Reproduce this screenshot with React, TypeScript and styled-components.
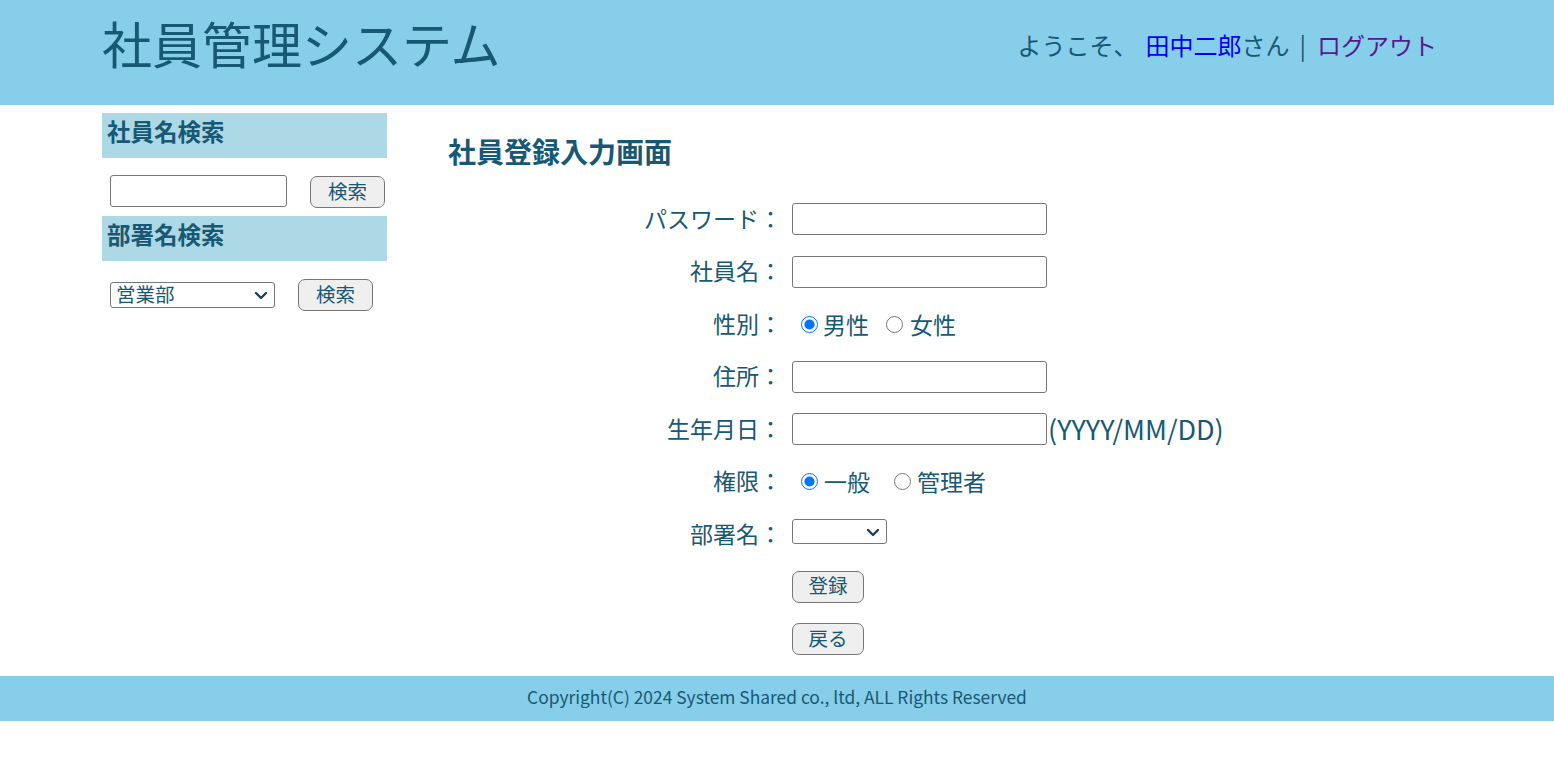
import React from "react";
import styled, { createGlobalStyle } from "styled-components";

const TEXT = "#175874";
const FONT = `"Noto Sans CJK JP", "Noto Sans", sans-serif`;

const GlobalStyle = createGlobalStyle`
  html, body { margin: 0; padding: 0; background: #ffffff; }
  body { font-family: ${FONT}; color: ${TEXT}; }
  * { box-sizing: border-box; }
`;

const Header = styled.header`
  background: #87ceeb;
  height: 105px;
  display: flex;
  align-items: center;
`;

const Container = styled.div`
  width: 1350px;
  margin: 0 auto;
`;

const HeaderInner = styled(Container)`
  display: flex;
  justify-content: space-between;
  align-items: center;
  padding-right: 15px;
  margin-top: -10px;
`;

const SiteTitle = styled.h1`
  margin: 0 0 12px 0;
  font-size: 50px;
  font-weight: normal;
  line-height: 1;
  color: ${TEXT};
`;

const Welcome = styled.div`
  font-size: 24px;
  line-height: 1;
  white-space: pre;
  display: flex;
  align-items: center;
  margin-bottom: 6px;
`;

const Greeting = styled.span`
  margin-right: 8px;
`;

const Separator = styled.span`
  margin: 0 11px 0 10px;
`;

const Link = styled.a<{ $visited?: boolean }>`
  color: ${(p) => (p.$visited ? "#551a8b" : "#0000ee")};
  text-decoration: none;
  cursor: pointer;
`;

const Body = styled(Container)`
  display: flex;
  align-items: flex-start;
`;

const Sidebar = styled.aside`
  width: 285px;
  padding-top: 8px;
`;

const SideHeading = styled.h3`
  margin: 0;
  height: 45px;
  background: #add8e6;
  font-size: 23.5px;
  line-height: 1;
  font-weight: bold;
  padding: 0 0 7px 5px;
  display: flex;
  align-items: center;
  color: ${TEXT};
`;

const SideRow = styled.div<{ $top: number; $bottom: number; $align: string }>`
  display: flex;
  align-items: ${(p) => p.$align};
  gap: 23px;
  padding: ${(p) => p.$top}px 0 ${(p) => p.$bottom}px 8px;
`;

const TextInput = styled.input<{ $w: number }>`
  width: ${(p) => p.$w}px;
  height: 32px;
  border: 1px solid #767676;
  border-radius: 3px;
  padding: 1px 4px;
  font-family: ${FONT};
  font-size: 20px;
  margin: 0;
  background: #fff;
`;

const SelectWrap = styled.div<{ $lift?: number }>`
  position: relative;
  display: inline-flex;
  margin-bottom: ${(p) => p.$lift ?? 0}px;
`;

const Select = styled.select<{ $w: number; $h: number }>`
  appearance: none;
  -webkit-appearance: none;
  width: ${(p) => p.$w}px;
  height: ${(p) => p.$h}px;
  border: 1px solid #767676;
  border-radius: 3px;
  font-family: ${FONT};
  font-size: 19.5px;
  line-height: 1;
  color: ${TEXT};
  padding: 0 24px 2px 5px;
  margin: 0;
  background: #fff;
`;

const Chevron = styled.svg`
  position: absolute;
  right: 7px;
  top: 50%;
  width: 14px;
  height: 9px;
  margin-top: -4px;
  pointer-events: none;
`;

const Button = styled.button<{ $w: number; $shift?: number }>`
  width: ${(p) => p.$w}px;
  height: 32px;
  border: 1px solid #767676;
  border-radius: 7px;
  background: #efefef;
  font-family: ${FONT};
  font-size: 19.5px;
  line-height: 1;
  color: ${TEXT};
  padding: 0 0 3px 0;
  margin: ${(p) => p.$shift ?? 0}px 0 0 0;
  cursor: pointer;
`;

const Main = styled.main`
  flex: 1;
  padding-bottom: 21px;
`;

const PageTitle = styled.h2`
  margin: 29px 0 0 61px;
  font-size: 28px;
  line-height: 34px;
  font-weight: bold;
  color: ${TEXT};
`;

const Form = styled.form`
  margin-top: 35px;
  display: grid;
  grid-template-columns: 395px auto;
  column-gap: 10px;
  grid-auto-rows: 32px;
  row-gap: 20.5px;
`;

const Label = styled.label`
  font-size: 23px;
  text-align: right;
  align-self: center;
  line-height: 1;
  white-space: pre;
  padding-bottom: 2px;
`;

const Field = styled.div`
  display: flex;
  align-items: center;
`;

const Hint = styled.span`
  font-size: 27px;
  line-height: 1;
  margin-left: 1px;
  padding-bottom: 2px;
`;

const RadioGroup = styled.div<{ $gap: number }>`
  display: flex;
  align-items: center;
  gap: ${(p) => p.$gap}px;
  padding-left: 9px;
`;

const RadioOption = styled.label<{ $textGap: number }>`
  display: flex;
  align-items: center;
  gap: ${(p) => p.$textGap}px;
  font-size: 23px;
  line-height: 1;
`;

const Radio = styled.input`
  width: 17px;
  height: 17px;
  margin: 0;
`;

const Footer = styled.footer`
  background: #87ceeb;
  height: 45px;
  display: flex;
  align-items: center;
  justify-content: center;
  font-size: 17.4px;
  line-height: 1;
  color: ${TEXT};
`;

const FooterText = styled.span`
  padding-bottom: 3px;
`;

const ChevronIcon = () => (
  <Chevron viewBox="0 0 14 9" aria-hidden="true">
    <path
      d="M2 2 L7 7 L12 2"
      fill="none"
      stroke="#1b3f55"
      strokeWidth="2.4"
      strokeLinecap="round"
      strokeLinejoin="round"
    />
  </Chevron>
);

export default function App() {
  return (
    <>
      <GlobalStyle />
      <Header>
        <HeaderInner>
          <SiteTitle>社員管理システム</SiteTitle>
          <Welcome>
            <Greeting>ようこそ、</Greeting>
            <Link>田中二郎</Link>
            さん
            <Separator>|</Separator>
            <Link $visited>ログアウト</Link>
          </Welcome>
        </HeaderInner>
      </Header>
      <Body>
        <Sidebar>
          <SideHeading>社員名検索</SideHeading>
          <SideRow $top={17} $bottom={8} $align="flex-start">
            <TextInput $w={177} type="text" />
            <Button $w={75} $shift={1} type="button">
              検索
            </Button>
          </SideRow>
          <SideHeading>部署名検索</SideHeading>
          <SideRow $top={18} $bottom={0} $align="center">
            <SelectWrap>
              <Select $w={165} $h={26} defaultValue="営業部">
                <option>営業部</option>
                <option>総務部</option>
                <option>開発部</option>
              </Select>
              <ChevronIcon />
            </SelectWrap>
            <Button $w={75} type="button">
              検索
            </Button>
          </SideRow>
        </Sidebar>
        <Main>
          <PageTitle>社員登録入力画面</PageTitle>
          <Form onSubmit={(e) => e.preventDefault()}>
            <Label>パスワード：</Label>
            <Field>
              <TextInput $w={255} type="password" />
            </Field>

            <Label>社員名：</Label>
            <Field>
              <TextInput $w={255} type="text" />
            </Field>

            <Label>性別：</Label>
            <Field>
              <RadioGroup $gap={17}>
                <RadioOption $textGap={5}>
                  <Radio type="radio" name="gender" defaultChecked />
                  男性
                </RadioOption>
                <RadioOption $textGap={7}>
                  <Radio type="radio" name="gender" />
                  女性
                </RadioOption>
              </RadioGroup>
            </Field>

            <Label>住所：</Label>
            <Field>
              <TextInput $w={255} type="text" />
            </Field>

            <Label>生年月日：</Label>
            <Field>
              <TextInput $w={255} type="text" />
              <Hint>(YYYY/MM/DD)</Hint>
            </Field>

            <Label>権限：</Label>
            <Field>
              <RadioGroup $gap={24}>
                <RadioOption $textGap={6}>
                  <Radio type="radio" name="role" defaultChecked />
                  一般
                </RadioOption>
                <RadioOption $textGap={6}>
                  <Radio type="radio" name="role" />
                  管理者
                </RadioOption>
              </RadioGroup>
            </Field>

            <Label>部署名：</Label>
            <Field>
              <SelectWrap $lift={5}>
                <Select $w={95} $h={25} defaultValue="">
                  <option value=""></option>
                  <option>営業部</option>
                  <option>総務部</option>
                </Select>
                <ChevronIcon />
              </SelectWrap>
            </Field>

            <span />
            <Field>
              <Button $w={72} type="submit">
                登録
              </Button>
            </Field>

            <span />
            <Field>
              <Button $w={72} type="button">
                戻る
              </Button>
            </Field>
          </Form>
        </Main>
      </Body>
      <Footer>
        <FooterText>
          Copyright(C) 2024 System Shared co., ltd, ALL Rights Reserved
        </FooterText>
      </Footer>
    </>
  );
}
